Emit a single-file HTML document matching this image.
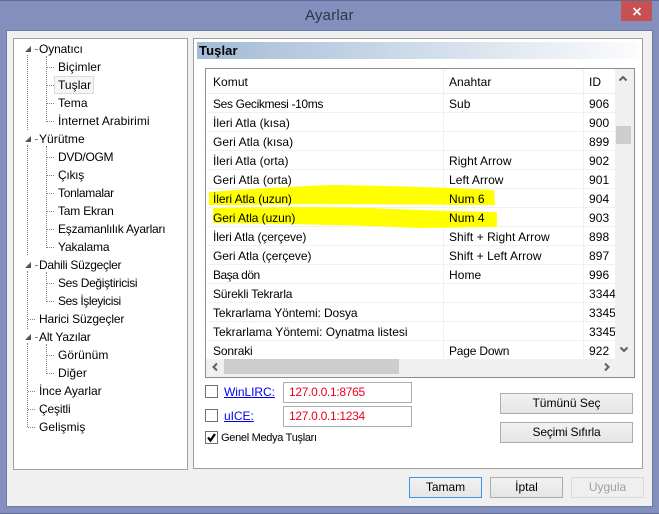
<!DOCTYPE html>
<html><head><meta charset="utf-8"><style>
html,body{margin:0;padding:0}
body{width:659px;height:514px;position:relative;overflow:hidden;background:#838fbd;font:12px/16px "Liberation Sans","DejaVu Sans",sans-serif;color:#000}
div,span{position:absolute;box-sizing:border-box;white-space:nowrap}
.t{height:16px;letter-spacing:.05px}
.d{border-left:1px dotted #808080;width:0}
.h{border-top:1px dotted #808080;height:0;width:7px}
.a{width:0;height:0;border-style:solid;border-width:0 0 6px 6px;border-color:transparent transparent #555 transparent}
.l{left:207px;width:408px;height:1px;background:#f0f0f0}
.v{top:70px;width:1px;height:288px;background:#f0f0f0}
.b{background:linear-gradient(#f2f2f2,#e5e5e5);border:1px solid #acacac;text-align:center;line-height:19px}
.c{width:13px;height:13px;border:1px solid #707070;background:#fff}
.i{width:129px;height:21px;left:283px;border:1px solid #abadb3;background:#fff;color:#f00018;line-height:19px;padding-left:5px;letter-spacing:-.3px}
a{color:#0000f0;text-decoration:underline}
</style></head><body>
<div style="left:0;top:0;width:659px;height:1px;background:#5f6b96"></div>
<div style="left:0;top:513px;width:659px;height:1px;background:#5f6b96"></div>
<div class="t" style="left:305px;top:8px;font-size:15px;color:#2f3548;letter-spacing:.2px">Ayarlar</div>
<div style="left:621px;top:1px;width:31px;height:20px;background:#c75050"></div>
<svg style="position:absolute;left:632px;top:7px" width="10" height="9"><path d="M1.500 1L8.500 8M8.500 1L1.500 8" stroke="#fff" stroke-width="1.600"/></svg>

<div style="left:7px;top:31px;width:645px;height:475px;background:#f0f0f0;outline:1px solid #6c7aa5"></div>

<div style="left:13px;top:38px;width:175px;height:432px;background:#fff;border:1px solid #a0a0a0"></div>
<div class="d" style="left:27px;top:55px;height:75px"></div>
<div class="d" style="left:27px;top:145px;height:110px"></div>
<div class="d" style="left:27px;top:271px;height:58px"></div>
<div class="d" style="left:27px;top:343px;height:84px"></div>
<div class="d" style="left:46px;top:56px;height:66px"></div>
<div class="d" style="left:46px;top:146px;height:102px"></div>
<div class="d" style="left:46px;top:272px;height:30px"></div>
<div class="d" style="left:46px;top:344px;height:30px"></div>
<div class="a" style="left:25px;top:46px"></div><div class="a" style="left:25px;top:136px"></div><div class="a" style="left:25px;top:262px"></div><div class="a" style="left:25px;top:334px"></div>
<div class="h" style="left:35px;top:49px;width:2px"></div><div class="h" style="left:35px;top:139px;width:2px"></div><div class="h" style="left:35px;top:265px;width:2px"></div><div class="h" style="left:35px;top:337px;width:2px"></div>
<div class="h" style="left:47px;top:67px"></div><div class="h" style="left:47px;top:85px"></div><div class="h" style="left:47px;top:103px"></div><div class="h" style="left:47px;top:121px"></div>
<div class="h" style="left:47px;top:157px"></div><div class="h" style="left:47px;top:175px"></div><div class="h" style="left:47px;top:193px"></div><div class="h" style="left:47px;top:211px"></div><div class="h" style="left:47px;top:229px"></div><div class="h" style="left:47px;top:247px"></div>
<div class="h" style="left:47px;top:283px"></div><div class="h" style="left:47px;top:301px"></div>
<div class="h" style="left:47px;top:355px"></div><div class="h" style="left:47px;top:373px"></div>
<div class="h" style="left:28px;top:319px"></div><div class="h" style="left:28px;top:391px"></div><div class="h" style="left:28px;top:409px"></div><div class="h" style="left:28px;top:427px"></div>
<div style="left:54px;top:76px;width:40px;height:18px;background:#f6f6f6;border:1px solid #dadada"></div>
<div class="t" style="left:39px;top:41px;letter-spacing:-.13px">Oynatıcı</div>
<div class="t" style="left:58px;top:59px">Biçimler</div>
<div class="t" style="left:58px;top:77px">Tuşlar</div>
<div class="t" style="left:58px;top:95px">Tema</div>
<div class="t" style="left:58px;top:113px">İnternet Arabirimi</div>
<div class="t" style="left:39px;top:131px">Yürütme</div>
<div class="t" style="left:58px;top:149px;letter-spacing:-.3px">DVD/OGM</div>
<div class="t" style="left:58px;top:167px;letter-spacing:-.28px">Çıkış</div>
<div class="t" style="left:58px;top:185px;letter-spacing:-.28px">Tonlamalar</div>
<div class="t" style="left:58px;top:203px;letter-spacing:-.2px">Tam Ekran</div>
<div class="t" style="left:58px;top:221px;letter-spacing:-.21px">Eşzamanlılık Ayarları</div>
<div class="t" style="left:58px;top:239px;letter-spacing:-.13px">Yakalama</div>
<div class="t" style="left:39px;top:257px;letter-spacing:-.28px">Dahili Süzgeçler</div>
<div class="t" style="left:58px;top:275px;letter-spacing:-.32px">Ses Değiştiricisi</div>
<div class="t" style="left:58px;top:293px;letter-spacing:-.42px">Ses İşleyicisi</div>
<div class="t" style="left:39px;top:311px;letter-spacing:-.13px">Harici Süzgeçler</div>
<div class="t" style="left:39px;top:329px;letter-spacing:-.18px">Alt Yazılar</div>
<div class="t" style="left:58px;top:347px">Görünüm</div>
<div class="t" style="left:58px;top:365px">Diğer</div>
<div class="t" style="left:39px;top:383px;letter-spacing:-.05px">İnce Ayarlar</div>
<div class="t" style="left:39px;top:401px;letter-spacing:-.16px">Çeşitli</div>
<div class="t" style="left:39px;top:419px">Gelişmiş</div>

<div style="left:193px;top:38px;width:450px;height:431px;background:#fff;border:1px solid #a0a0a0"></div>
<div style="left:197px;top:42px;width:442px;height:17px;background:linear-gradient(90deg,#a3bbd6,#fbfcfd)"></div>
<div class="t" style="left:199px;top:43px;font-weight:bold;font-size:13px;letter-spacing:.1px">Tuşlar</div>

<div style="left:205px;top:68px;width:430px;height:310px;background:#fff;border:1px solid #8a8d94"></div>
<div class="l" style="top:93px;background:#e8eef6"></div>
<div class="l" style="top:112px"></div><div class="l" style="top:131px"></div><div class="l" style="top:150px"></div><div class="l" style="top:169px"></div><div class="l" style="top:188px"></div><div class="l" style="top:207px"></div><div class="l" style="top:226px"></div><div class="l" style="top:245px"></div><div class="l" style="top:264px"></div><div class="l" style="top:283px"></div><div class="l" style="top:302px"></div><div class="l" style="top:321px"></div><div class="l" style="top:340px"></div>
<div class="v" style="left:443px"></div><div class="v" style="left:583px"></div>

<svg style="position:absolute;left:0;top:0" width="659" height="514"><path d="M209 192Q260 188 330 185Q420 186 494 190L495 205L300 204Q250 205 209 205ZM213 208Q300 206 370 208Q440 211 497 212V227L420 228Q330 224 213 223Z" fill="#ffff00"/></svg>

<div class="t" style="left:213px;top:74px">Komut</div><div class="t" style="left:449px;top:74px">Anahtar</div><div class="t" style="left:589px;top:74px">ID</div>
<div class="t" style="left:213px;top:96px;letter-spacing:-.35px">Ses Gecikmesi -10ms</div><div class="t" style="left:449px;top:96px">Sub</div><div class="t" style="left:589px;top:96px">906</div>
<div class="t" style="left:213px;top:115px">İleri Atla (kısa)</div><div class="t" style="left:589px;top:115px">900</div>
<div class="t" style="left:213px;top:134px">Geri Atla (kısa)</div><div class="t" style="left:589px;top:134px">899</div>
<div class="t" style="left:213px;top:153px">İleri Atla (orta)</div><div class="t" style="left:449px;top:153px">Right Arrow</div><div class="t" style="left:589px;top:153px">902</div>
<div class="t" style="left:213px;top:172px">Geri Atla (orta)</div><div class="t" style="left:449px;top:172px">Left Arrow</div><div class="t" style="left:589px;top:172px">901</div>
<div class="t" style="left:213px;top:191px;letter-spacing:-.07px">İleri Atla (uzun)</div><div class="t" style="left:449px;top:191px">Num 6</div><div class="t" style="left:589px;top:191px">904</div>
<div class="t" style="left:213px;top:210px;letter-spacing:-.07px">Geri Atla (uzun)</div><div class="t" style="left:449px;top:210px">Num 4</div><div class="t" style="left:589px;top:210px">903</div>
<div class="t" style="left:213px;top:229px;letter-spacing:-.14px">İleri Atla (çerçeve)</div><div class="t" style="left:449px;top:229px">Shift + Right Arrow</div><div class="t" style="left:589px;top:229px">898</div>
<div class="t" style="left:213px;top:248px;letter-spacing:-.05px">Geri Atla (çerçeve)</div><div class="t" style="left:449px;top:248px">Shift + Left Arrow</div><div class="t" style="left:589px;top:248px">897</div>
<div class="t" style="left:213px;top:267px;letter-spacing:-.5px">Başa dön</div><div class="t" style="left:449px;top:267px">Home</div><div class="t" style="left:589px;top:267px">996</div>
<div class="t" style="left:213px;top:286px;letter-spacing:-.2px">Sürekli Tekrarla</div>
<div style="left:589px;top:286px;width:26px;height:60px;overflow:hidden"><div class="t" style="left:0;top:0">33449</div><div class="t" style="left:0;top:19px">33450</div><div class="t" style="left:0;top:38px">33451</div></div>
<div class="t" style="left:213px;top:305px;letter-spacing:-.11px">Tekrarlama Yöntemi: Dosya</div>
<div class="t" style="left:213px;top:324px;letter-spacing:-.02px">Tekrarlama Yöntemi: Oynatma listesi</div>
<div class="t" style="left:213px;top:343px;letter-spacing:-.16px">Sonraki</div><div class="t" style="left:449px;top:343px;letter-spacing:-.2px">Page Down</div><div class="t" style="left:589px;top:343px">922</div>

<div style="left:615px;top:69px;width:19px;height:308px;background:#f0f0f0"></div>
<div style="left:616px;top:126px;width:15px;height:18px;background:#cdcdcd"></div>
<svg style="position:absolute;left:618px;top:75px" width="10" height="7"><path d="M1.500 5.500L5 2L8.500 5.500" fill="none" stroke="#606060" stroke-width="2"/></svg>
<svg style="position:absolute;left:619px;top:346px" width="10" height="7"><path d="M1.500 1.500L5 5L8.500 1.500" fill="none" stroke="#606060" stroke-width="2"/></svg>
<div style="left:206px;top:359px;width:410px;height:18px;background:#f0f0f0"></div>
<div style="left:224px;top:359px;width:175px;height:15px;background:#cdcdcd"></div>
<svg style="position:absolute;left:211px;top:362px" width="8" height="10"><path d="M6 1.500L2.500 5L6 8.500" fill="none" stroke="#606060" stroke-width="2"/></svg>
<svg style="position:absolute;left:603px;top:362px" width="8" height="10"><path d="M2 1.500L5.500 5L2 8.500" fill="none" stroke="#606060" stroke-width="2"/></svg>

<div class="c" style="left:205px;top:385px"></div>
<div class="c" style="left:205px;top:409px"></div>
<div class="c" style="left:205px;top:431px"></div>
<svg style="position:absolute;left:206px;top:432px" width="11" height="11"><path d="M2 5.500L4.500 8.500L9 2" fill="none" stroke="#000" stroke-width="2.200"/></svg>
<div class="t" style="left:224px;top:384px;letter-spacing:-.05px"><a>WinLIRC:</a></div>
<div class="t" style="left:224px;top:408px;letter-spacing:-.05px"><a>uICE:</a></div>
<div class="i" style="top:382px">127.0.0.1:8765</div>
<div class="i" style="top:406px">127.0.0.1:1234</div>
<div class="t" style="left:221px;top:430px;font-size:11px;letter-spacing:-.3px">Genel Medya Tuşları</div>

<div class="b" style="left:500px;top:393px;width:133px;height:21px">Tümünü Seç</div>
<div class="b" style="left:500px;top:422px;width:133px;height:21px;letter-spacing:-.2px">Seçimi Sıfırla</div>
<div class="b" style="left:409px;top:477px;width:73px;height:21px;border-color:#3c96e6">Tamam</div>
<div class="b" style="left:490px;top:477px;width:73px;height:21px">İptal</div>
<div class="b" style="left:571px;top:477px;width:73px;height:21px;background:#efefef;border-color:#d9d9d9;color:#a0a0a0">Uygula</div>
</body></html>
